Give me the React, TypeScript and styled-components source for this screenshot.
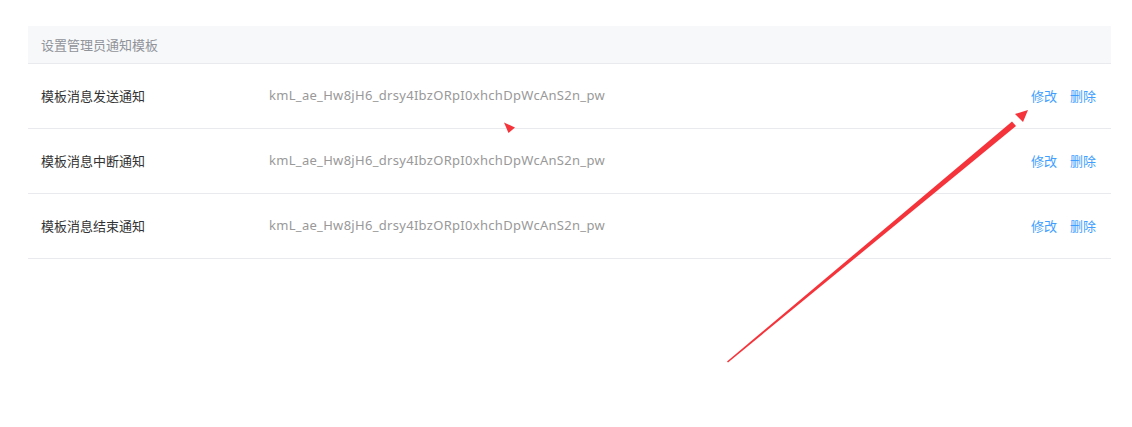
import React from "react";
import styled, { createGlobalStyle } from "styled-components";

const Global = createGlobalStyle`
  html, body { margin: 0; padding: 0; background: #fff; }
  body { font-family: "Noto Sans CJK SC", "Noto Sans", sans-serif; }
`;

const Page = styled.div`
  position: relative;
  width: 1132px;
  height: 427px;
  padding: 26px 21px 0 28px;
  box-sizing: border-box;
`;

const Table = styled.div`
  display: flex;
  flex-direction: column;
  width: 1083px;
`;

const Header = styled.div`
  height: 37px;
  display: flex;
  align-items: center;
  padding-left: 13px;
  background: #f7f8fa;
  border-bottom: 1px solid #e8eaee;
  font-size: 13px;
  color: #909399;
`;

const Row = styled.div`
  height: 64px;
  display: grid;
  grid-template-columns: 228px 1fr auto;
  align-items: center;
  padding: 0 15px 0 13px;
  border-bottom: 1px solid #e8eaee;
  font-size: 13px;
  line-height: 1;
  padding-bottom: 1px;
  box-sizing: border-box;
  height: 65px;
`;

const Name = styled.span`
  color: #333;
`;

const Code = styled.span`
  color: #999;
  font-family: "Noto Sans", sans-serif;
  font-size: 13px;
  letter-spacing: 0.3px;
`;

const Actions = styled.div`
  display: flex;
  gap: 13px;
`;

const Link = styled.a`
  color: #409eff;
  cursor: pointer;
`;

const Overlay = styled.svg`
  position: absolute;
  left: 0;
  top: 0;
  pointer-events: none;
`;

const rows = ["模板消息发送通知", "模板消息中断通知", "模板消息结束通知"];
const code = "kmL_ae_Hw8jH6_drsy4IbzORpI0xhchDpWcAnS2n_pw";

export default function App() {
  return (
    <>
      <Global />
      <Page>
        <Table>
          <Header>设置管理员通知模板</Header>
          {rows.map((r) => (
            <Row key={r}>
              <Name>{r}</Name>
              <Code>{code}</Code>
              <Actions>
                <Link>修改</Link>
                <Link>删除</Link>
              </Actions>
            </Row>
          ))}
        </Table>
        <Overlay width="1132" height="427" viewBox="0 0 1132 427">
          <polygon points="504,122.5 515,127.5 508.5,133" fill="#f5333a" />
          <polygon points="727,361.5 1012,121.5 1016,126 728,362.5" fill="#f5333a" />
          <polygon points="1028,110 1015,114 1023,122" fill="#f5333a" />
        </Overlay>
      </Page>
    </>
  );
}
